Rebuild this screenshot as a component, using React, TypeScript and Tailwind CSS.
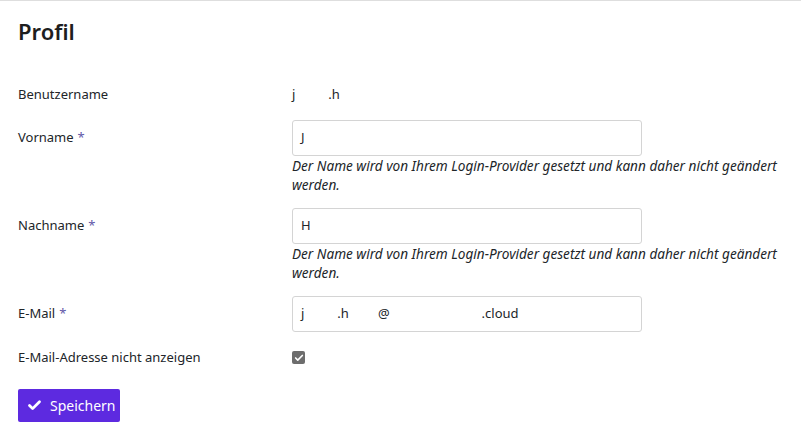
import { Check } from 'lucide-react';

const font = { fontFamily: '"Segoe UI", "Noto Sans", "Open Sans", sans-serif' };

function Label({ text, required }: { text: string; required?: boolean }) {
  return (
    <div className="h-9 flex items-center">
      {text}
      {required && <span className="ml-1 text-[#5f57a8]">*</span>}
    </div>
  );
}

function Hint() {
  return (
    <p className="italic text-[13.6px] leading-[19px] max-w-[500px]">
      Der Name wird von Ihrem Login-Provider gesetzt und kann daher nicht geändert werden.
    </p>
  );
}

export default function App() {
  return (
    <div
      className="min-h-screen bg-white border-t border-[#dedede] px-[18px] text-[13px] text-[#212529]"
      style={font}
    >
      <h1 className="pt-[14px] text-[22px] leading-[32px] font-semibold text-[#1e1e1e]">Profil</h1>

      <div className="mt-[30px] grid grid-cols-[274px_1fr]">
        <Label text="Benutzername" />
        <div className="h-9 flex items-center">
          <span>j</span>
          <span className="ml-[33px]">.h</span>
        </div>
      </div>

      <div className="mt-[7px] grid grid-cols-[274px_1fr]">
        <Label text="Vorname" required />
        <div>
          <div className="w-[350px] h-9 border border-[#d4d4d4] rounded-[3px] px-2 flex items-center">J</div>
          <Hint />
        </div>
      </div>

      <div className="mt-[14px] grid grid-cols-[274px_1fr]">
        <Label text="Nachname" required />
        <div>
          <div className="w-[350px] h-9 border border-[#d4d4d4] rounded-[3px] px-2 flex items-center">H</div>
          <Hint />
        </div>
      </div>

      <div className="mt-[14px] grid grid-cols-[274px_1fr]">
        <Label text="E-Mail" required />
        <div className="w-[350px] h-9 border border-[#d4d4d4] rounded-[3px] px-2 flex items-center">
          <span>j</span>
          <span className="ml-[33px]">.h</span>
          <span className="ml-[29px]">@</span>
          <span className="ml-[92px]">.cloud</span>
        </div>
      </div>

      <div className="mt-[16px] grid grid-cols-[274px_1fr] items-center">
        <div className="leading-[19px]">E-Mail-Adresse nicht anzeigen</div>
        <div className="w-[13px] h-[13px] rounded-[2px] bg-[#6d6d6d] flex items-center justify-center">
          <Check className="w-[10px] h-[10px] text-white" strokeWidth={4} />
        </div>
      </div>

      <button className="mt-[22px] h-[33px] w-[102px] bg-[#5d2ae0] rounded-[2px] text-white text-[14px] flex items-center pl-[9px] gap-[8px]">
        <Check className="w-[15px] h-[15px]" strokeWidth={4.5} />
        Speichern
      </button>
    </div>
  );
}
